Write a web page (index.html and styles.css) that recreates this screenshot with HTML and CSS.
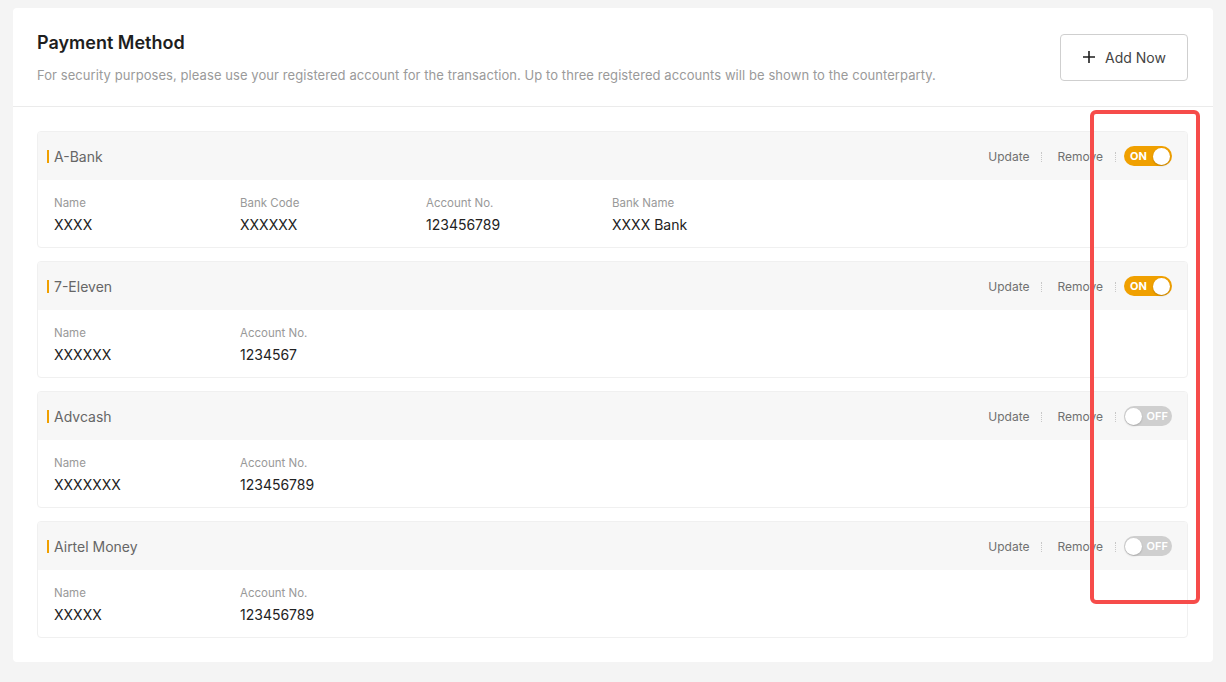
FILE: index.html
```html
<!DOCTYPE html>
<html lang="en">
<head>
    <meta charset="UTF-8">
    <meta name="viewport" content="width=device-width, initial-scale=1.0">
    <title>Payment Method</title>
    <link rel="stylesheet" href="styles.css">
</head>
<body>
    <div class="card">
        <div class="card-header">
            <div class="heading">
                <h1>Payment Method</h1>
                <p>For security purposes, please use your registered account for the transaction. Up to three registered accounts will be shown to the counterparty.</p>
            </div>
            <button class="add-btn" type="button">
                <svg width="14" height="14" viewBox="0 0 14 14"><path d="M7 1v12M1 7h12" stroke="#1e1e1e" stroke-width="1.6"/></svg>
                Add Now
            </button>
        </div>

        <div class="method-list">
            <div class="method">
                <div class="method-head">
                    <span class="method-name">A-Bank</span>
                    <div class="actions">
                        <a>Update</a><i class="sep"></i><a>Remove</a><i class="sep"></i>
                        <span class="toggle on"><b>ON</b><span class="knob"></span></span>
                    </div>
                </div>
                <div class="method-body">
                    <div class="field"><span>Name</span><strong>XXXX</strong></div>
                    <div class="field"><span>Bank Code</span><strong>XXXXXX</strong></div>
                    <div class="field"><span>Account No.</span><strong>123456789</strong></div>
                    <div class="field"><span>Bank Name</span><strong>XXXX Bank</strong></div>
                </div>
            </div>

            <div class="method">
                <div class="method-head">
                    <span class="method-name">7-Eleven</span>
                    <div class="actions">
                        <a>Update</a><i class="sep"></i><a>Remove</a><i class="sep"></i>
                        <span class="toggle on"><b>ON</b><span class="knob"></span></span>
                    </div>
                </div>
                <div class="method-body">
                    <div class="field"><span>Name</span><strong>XXXXXX</strong></div>
                    <div class="field"><span>Account No.</span><strong>1234567</strong></div>
                </div>
            </div>

            <div class="method">
                <div class="method-head">
                    <span class="method-name">Advcash</span>
                    <div class="actions">
                        <a>Update</a><i class="sep"></i><a>Remove</a><i class="sep"></i>
                        <span class="toggle off"><span class="knob"></span><b>OFF</b></span>
                    </div>
                </div>
                <div class="method-body">
                    <div class="field"><span>Name</span><strong>XXXXXXX</strong></div>
                    <div class="field"><span>Account No.</span><strong>123456789</strong></div>
                </div>
            </div>

            <div class="method">
                <div class="method-head">
                    <span class="method-name">Airtel Money</span>
                    <div class="actions">
                        <a>Update</a><i class="sep"></i><a>Remove</a><i class="sep"></i>
                        <span class="toggle off"><span class="knob"></span><b>OFF</b></span>
                    </div>
                </div>
                <div class="method-body">
                    <div class="field"><span>Name</span><strong>XXXXX</strong></div>
                    <div class="field"><span>Account No.</span><strong>123456789</strong></div>
                </div>
            </div>
        </div>

        <div class="highlight"></div>
    </div>
</body>
</html>
```

FILE: styles.css
```css
* {
    box-sizing: border-box;
}
body {
    margin: 0;
    padding: 8px 13px 20px;
    background-color: #f4f4f4;
    font-family: "Inter", "Noto Sans", sans-serif;
    color: #1e1e1e;
}
.card {
    position: relative;
    width: 1200px;
    background-color: #fff;
    border-radius: 4px;
}
.card-header {
    display: flex;
    align-items: center;
    justify-content: space-between;
    padding: 22px 25px 22px 24px;
    border-bottom: 1px solid #ebebeb;
}
.heading {
    padding-top: 1px;
}
.heading h1 {
    margin: 0;
    font-size: 18px;
    line-height: 24px;
    font-weight: 600;
    color: #1e1e1e;
}
.heading p {
    margin: 11px 0 0;
    font-size: 13px;
    line-height: 18px;
    color: #9a9a9a;
    letter-spacing: 0.07px;
}
.add-btn {
    display: flex;
    align-items: center;
    gap: 9px;
    width: 128px;
    height: 47px;
    justify-content: center;
    background: #fff;
    border: 1px solid #cfcfcf;
    border-radius: 4px;
    font-family: inherit;
    font-size: 14px;
    color: #444;
    cursor: pointer;
}
.method-list {
    display: flex;
    flex-direction: column;
    gap: 13px;
    padding: 24px 25px 24px 24px;
}
.method {
    border: 1px solid #f0f0f0;
    border-radius: 4px;
    overflow: hidden;
}
.method-head {
    display: flex;
    align-items: center;
    justify-content: space-between;
    height: 48px;
    padding: 0 15px 0 9px;
    background-color: #f7f7f7;
}
.method-name {
    display: flex;
    align-items: center;
    gap: 5px;
    font-size: 14px;
    color: #666;
}
.method-name::before {
    content: "";
    width: 2px;
    height: 13px;
    background-color: #f0a000;
}
.actions {
    display: flex;
    align-items: center;
    font-size: 12px;
    color: #707070;
}
.actions a {
    cursor: pointer;
}
.sep {
    width: 1px;
    height: 10px;
    margin: 2px 15px 0 12px;
    border-left: 1px dotted #c8c8c8;
}
.sep:last-of-type {
    margin-right: 8px;
}
.toggle {
    display: flex;
    align-items: center;
    justify-content: space-between;
    width: 48px;
    height: 20px;
    padding: 0 2px 0 6px;
    border-radius: 10px;
    font-size: 11px;
    color: #fff;
}
.toggle b {
    font-weight: 700;
}
.toggle.on {
    background-color: #f0a000;
}
.toggle.off {
    background-color: #cfcfcf;
    padding: 0 4px 0 1px;
}
.toggle.off b {
    font-weight: 600;
}
.knob {
    width: 17px;
    height: 17px;
    border-radius: 50%;
    background: #fff;
    box-shadow: 0 1px 2px rgba(0, 0, 0, 0.2);
}
.method-body {
    display: flex;
    padding: 16px 16px 13px;
}
.field {
    display: flex;
    flex-direction: column;
    width: 186px;
}
.field span {
    font-size: 11.5px;
    line-height: 15px;
    color: #999;
}
.field strong {
    margin-top: 4px;
    font-weight: 400;
    font-size: 14px;
    line-height: 19px;
    color: #222;
}
.highlight {
    position: absolute;
    left: 1077px;
    top: 102px;
    width: 110px;
    height: 494px;
    border: 4px solid #f64c4a;
    border-radius: 6px;
    pointer-events: none;
}
```
